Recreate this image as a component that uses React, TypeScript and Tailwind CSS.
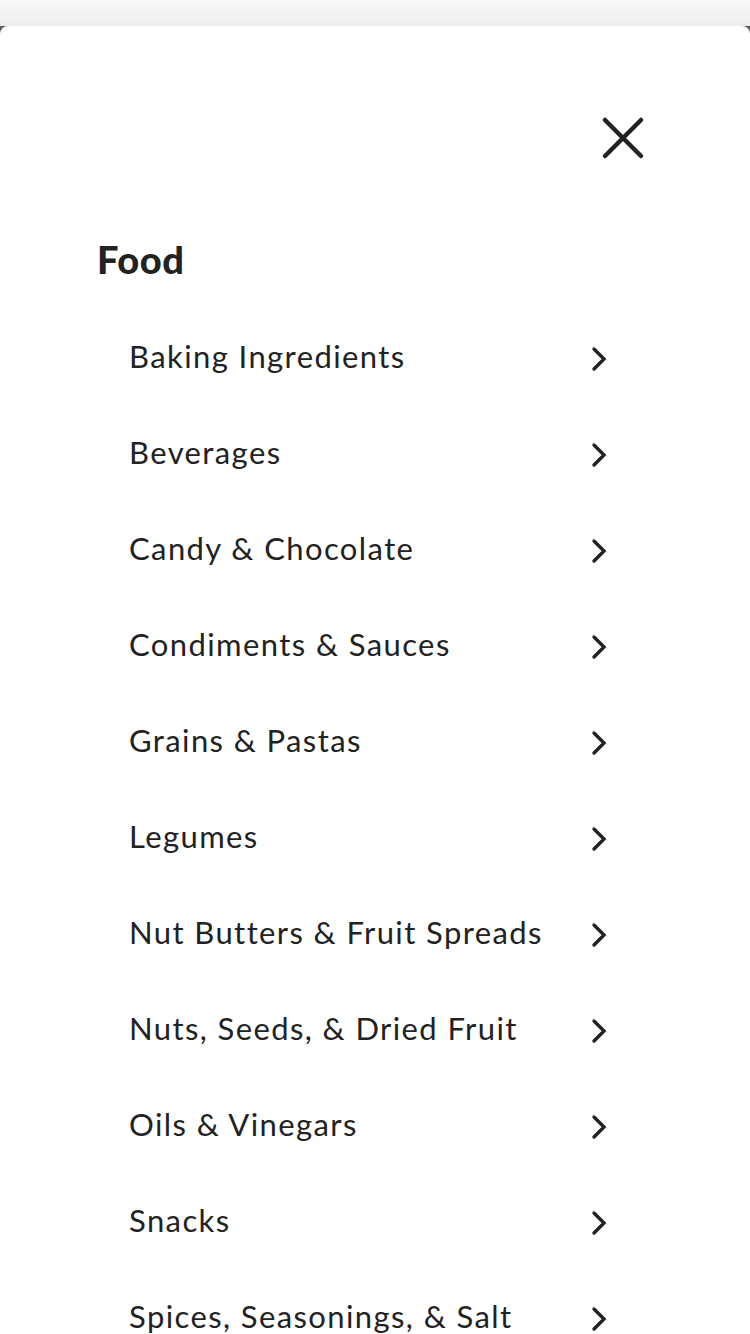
import React from "react";

const items = [
  "Baking Ingredients",
  "Beverages",
  "Candy & Chocolate",
  "Condiments & Sauces",
  "Grains & Pastas",
  "Legumes",
  "Nut Butters & Fruit Spreads",
  "Nuts, Seeds, & Dried Fruit",
  "Oils & Vinegars",
  "Snacks",
  "Spices, Seasonings, & Salt",
];

function Chevron() {
  return (
    <svg width="20" height="28" viewBox="0 0 20 28" fill="none">
      <path d="M4 4 L14 14 L4 24" stroke="#222" strokeWidth="3.4" strokeLinecap="round" strokeLinejoin="miter" />
    </svg>
  );
}

export default function App() {
  return (
    <div className="w-[750px] h-[1334px] overflow-hidden bg-[#5f5966] flex flex-col" style={{ fontFamily: "Lato, 'Open Sans', sans-serif" }}>
      <div className="h-[26px] shrink-0 bg-gradient-to-b from-[#f9f9f9] to-[#ededed]" />
      <div className="flex-1 bg-white rounded-t-[8px] flex flex-col">
        <div className="flex justify-end pr-[105px] pt-[90px]">
          <svg width="44" height="44" viewBox="0 0 44 44" fill="none">
            <path d="M4 4 L40 40 M40 4 L4 40" stroke="#222" strokeWidth="4.5" strokeLinecap="round" />
          </svg>
        </div>
        <h1 className="pl-[97px] mt-[80px] text-[38px] font-black text-[#222] leading-none tracking-[0.5px]">Food</h1>
        <ul className="mt-[58px] pl-[129px] pr-[140px] flex flex-col">
          {items.map((item) => (
            <li key={item} className="h-[96px] flex items-start justify-between">
              <span className="text-[31px] leading-[40px] text-[#222] tracking-[1.4px]">{item}</span>
              <span className="mt-[9px]"><Chevron /></span>
            </li>
          ))}
        </ul>
      </div>
    </div>
  );
}
